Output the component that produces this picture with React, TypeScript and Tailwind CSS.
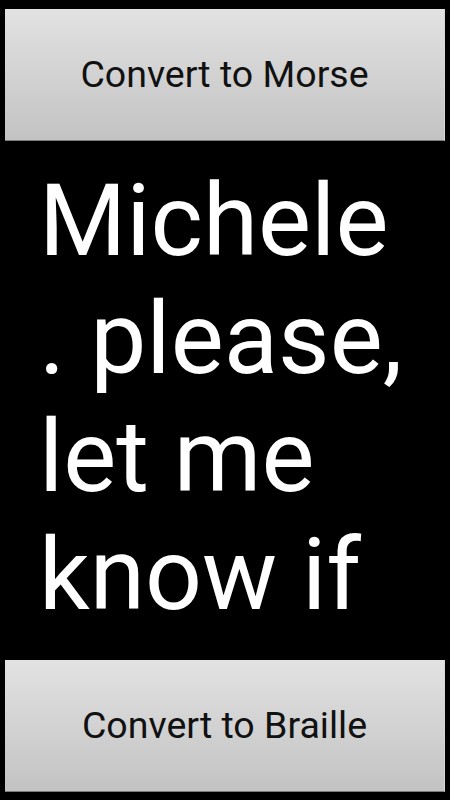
import React from "react";

function GrayButton({ label }: { label: string }) {
  return (
    <button
      type="button"
      className="h-[132px] w-full shrink-0 bg-gradient-to-b from-[#e2e2e2] to-[#c3c3c3] border-b border-[#7c7c7c] border-r border-r-[#d6d6d6] flex items-center justify-center text-[37.5px] text-[#111111] font-['Roboto',sans-serif]"
    >
      {label}
    </button>
  );
}

export default function App() {
  return (
    <div className="h-[800px] w-[450px] bg-black flex flex-col pt-[9px] pb-[8px] px-[5px]">
      <GrayButton label="Convert to Morse" />
      <div className="flex-1 min-h-0 overflow-hidden mt-[21px] mb-[10px] pl-[34px] pr-[28px]">
        <p className="text-white text-[100px] leading-[118px] font-['Roboto',sans-serif]">
          Michele . please, let me know if there is anything
        </p>
      </div>
      <GrayButton label="Convert to Braille" />
    </div>
  );
}
